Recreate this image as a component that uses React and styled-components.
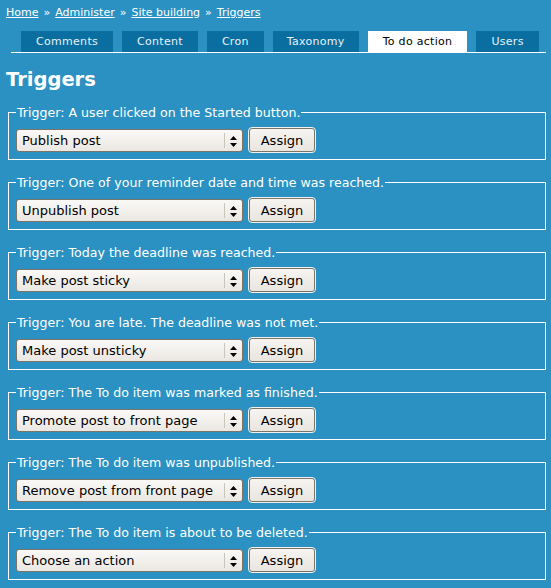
import React from 'react';
import styled, { createGlobalStyle } from 'styled-components';

const GlobalStyle = createGlobalStyle`
  html, body {
    margin: 0;
    padding: 0;
    background: #2a91c2;
  }
  body {
    font-family: "DejaVu Sans", Verdana, sans-serif;
    color: #fff;
  }
`;

const Page = styled.div`
  padding: 5px 6px 8px 6px;
  background: #2a91c2;
  min-height: 588px;
  box-sizing: border-box;
`;

const Breadcrumb = styled.div`
  font-size: 11px;
  line-height: 15px;
  height: 26px;
`;

const Crumb = styled.a`
  color: #fff;
  text-decoration: underline;
`;

const Sep = styled.span`
  margin: 0 5px;
`;

const Tabs = styled.ul`
  display: flex;
  gap: 9px;
  list-style: none;
  margin: 0 0 0 5px;
  padding: 0 7px 0 10px;
  width: max-content;
  border-bottom: 1px solid #fff;
`;

const Tab = styled.li`
  height: 21px;
  line-height: 21px;
  padding: 0 ${(p) => p.$pad}px;
  font-size: 11px;
  letter-spacing: 0.3px;
  background: ${(p) => (p.$active ? '#fff' : '#0a6ea0')};
  color: ${(p) => (p.$active ? '#000' : '#e8f2f8')};
`;

const Title = styled.h1`
  font-size: 19.5px;
  font-weight: bold;
  margin: 15px 0 13px 0;
  line-height: 24px;
`;

const Fieldset = styled.fieldset`
  margin: 0 0 15px 2px;
  width: 538px;
  box-sizing: border-box;
  border: 1px solid #fff;
  padding: 8px 7px 7px 7px;
  display: flex;
  gap: 6px;
  align-items: center;
`;

const Legend = styled.legend`
  font-size: 12.6px;
  padding: 0 1px;
  color: #fff;
`;

const Select = styled.div`
  position: relative;
  width: 227px;
  height: 23px;
  box-sizing: border-box;
  border: 1px solid #7d7468;
  border-radius: 3px;
  background: linear-gradient(#faf9f7, #ebe7e2);
  color: #000;
  font-size: 13px;
  line-height: 21px;
  padding-left: 5px;
`;

const Divider = styled.span`
  position: absolute;
  right: 17px;
  top: 3px;
  bottom: 3px;
  width: 1px;
  background: #c9c4bc;
`;

const Arrows = styled.svg`
  position: absolute;
  right: 5px;
  top: 6px;
`;

const Button = styled.button`
  width: 66px;
  height: 24px;
  box-sizing: border-box;
  border: 1px solid #7d7468;
  border-radius: 3px;
  background: linear-gradient(#f6f4f1, #e9e5df);
  outline: 1px solid #f4f2ee;
  color: #000;
  font-family: "DejaVu Sans", Verdana, sans-serif;
  font-size: 13px;
  padding: 0;
`;

const tabs = [
  { label: 'Comments', pad: 15 },
  { label: 'Content', pad: 15 },
  { label: 'Cron', pad: 15 },
  { label: 'Taxonomy', pad: 14 },
  { label: 'To do action', pad: 15, active: true },
  { label: 'Users', pad: 15 },
];

const triggers = [
  ['A user clicked on the Started button.', 'Publish post'],
  ['One of your reminder date and time was reached.', 'Unpublish post'],
  ['Today the deadline was reached.', 'Make post sticky'],
  ['You are late. The deadline was not met.', 'Make post unsticky'],
  ['The To do item was marked as finished.', 'Promote post to front page'],
  ['The To do item was unpublished.', 'Remove post from front page'],
  ['The To do item is about to be deleted.', 'Choose an action'],
];

export default function App() {
  return (
    <Page>
      <GlobalStyle />
      <Breadcrumb>
        <Crumb>Home</Crumb>
        <Sep>»</Sep>
        <Crumb>Administer</Crumb>
        <Sep>»</Sep>
        <Crumb>Site building</Crumb>
        <Sep>»</Sep>
        <Crumb>Triggers</Crumb>
      </Breadcrumb>
      <Tabs>
        {tabs.map((t) => (
          <Tab key={t.label} $active={t.active} $pad={t.pad}>
            {t.label}
          </Tab>
        ))}
      </Tabs>
      <Title>Triggers</Title>
      {triggers.map(([text, action]) => (
        <Fieldset key={text}>
          <Legend>Trigger: {text}</Legend>
          <Select>
            {action}
            <Divider />
            <Arrows width="7" height="11" viewBox="0 0 7 11">
              <path d="M3.5 0 L7 4 L0 4 Z M0 7 L7 7 L3.5 11 Z" fill="#000" />
            </Arrows>
          </Select>
          <Button>Assign</Button>
        </Fieldset>
      ))}
    </Page>
  );
}
